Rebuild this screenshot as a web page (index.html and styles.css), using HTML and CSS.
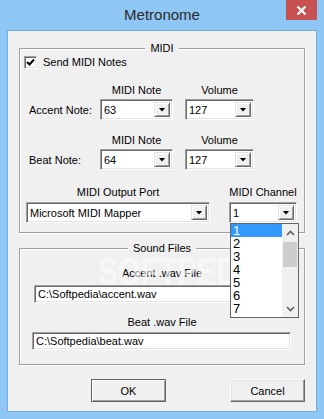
FILE: index.html
```html
<!DOCTYPE html>
<html lang="en">
<head>
    <meta charset="UTF-8">
    <meta name="viewport" content="width=device-width, initial-scale=1.0">
    <title>Metronome</title>
    <link rel="stylesheet" href="styles.css">
</head>
<body>
    <div class="window">
        <div class="titlebar">
            <span class="title">Metronome</span>
            <span class="close">
                <svg width="11" height="9" viewBox="0 0 11 9"><path d="M1.5 0.5 L9.5 8.5 M9.5 0.5 L1.5 8.5" stroke="#fff" stroke-width="2.2"/></svg>
            </span>
        </div>
        <div class="client">
            <div class="group midi">
                <div class="legend">MIDI</div>
                <div class="check-row">
                    <span class="checkbox">
                        <svg width="9" height="9" viewBox="0 0 9 9"><path d="M1 4 L3.5 6.5 L8 1.5" fill="none" stroke="#000" stroke-width="2"/></svg>
                    </span>
                    <span>Send MIDI Notes</span>
                </div>

                <div class="head-row">
                    <span class="h-note">MIDI Note</span>
                    <span class="h-vol">Volume</span>
                </div>
                <div class="combo-row">
                    <span class="row-label">Accent Note:</span>
                    <div class="combo note"><span class="val">63</span><span class="drop"></span></div>
                    <div class="combo vol"><span class="val">127</span><span class="drop"></span></div>
                </div>

                <div class="head-row second">
                    <span class="h-note">MIDI Note</span>
                    <span class="h-vol">Volume</span>
                </div>
                <div class="combo-row">
                    <span class="row-label">Beat Note:</span>
                    <div class="combo note"><span class="val">64</span><span class="drop"></span></div>
                    <div class="combo vol"><span class="val">127</span><span class="drop"></span></div>
                </div>

                <div class="port-heads">
                    <span class="h-port">MIDI Output Port</span>
                    <span class="h-chan">MIDI Channel</span>
                </div>
                <div class="port-row">
                    <div class="combo port"><span class="val">Microsoft MIDI Mapper</span><span class="drop"></span></div>
                    <div class="combo chan">
                        <span class="val">1</span><span class="drop"></span>
                        <div class="list">
                            <div class="items">
                                <div class="item selected">1</div>
                                <div class="item">2</div>
                                <div class="item">3</div>
                                <div class="item">4</div>
                                <div class="item">5</div>
                                <div class="item">6</div>
                                <div class="item">7</div>
                            </div>
                            <div class="scrollbar">
                                <span class="arrow">
                                    <svg width="9" height="6" viewBox="0 0 9 6"><path d="M1 5 L4.5 1.5 L8 5" fill="none" stroke="#606060" stroke-width="1.6"/></svg>
                                </span>
                                <span class="track"><span class="thumb"></span></span>
                                <span class="arrow">
                                    <svg width="9" height="6" viewBox="0 0 9 6"><path d="M1 1 L4.5 4.5 L8 1" fill="none" stroke="#606060" stroke-width="1.6"/></svg>
                                </span>
                            </div>
                        </div>
                    </div>
                </div>
            </div>

            <div class="group sound">
                <div class="legend">Sound Files</div>
                <div class="file-label first">Accent .wav File</div>
                <div class="textbox accent">C:\Softpedia\accent.wav</div>
                <div class="file-label">Beat .wav File</div>
                <div class="textbox beat">C:\Softpedia\beat.wav</div>
                <div class="watermark">SOFTPEDIA<sup>®</sup></div>
            </div>

            <div class="buttons">
                <button class="btn default">OK</button>
                <button class="btn">Cancel</button>
            </div>
        </div>
    </div>
</body>
</html>
```

FILE: styles.css
```css
* {
    box-sizing: border-box;
}

body {
    margin: 0;
    font-family: 'Liberation Sans', Arial, sans-serif;
    font-size: 11px;
    color: #000;
    background: #8ec6f4;
}

.window {
    width: 324px;
    height: 419px;
    background: #8ec6f4;
    overflow: hidden;
}

/* title bar */
.titlebar {
    position: relative;
    height: 30px;
    line-height: 30px;
    text-align: center;
}

.title {
    font-size: 15px;
    color: #2b2b2b;
}

.close {
    position: absolute;
    top: 0;
    right: 7px;
    width: 31px;
    height: 20px;
    background: #c75050;
    display: flex;
    align-items: center;
    justify-content: center;
}

.client {
    margin-left: 7px;
    width: 310px;
    height: 382px;
    background: #f0f0f0;
    border: 1px solid #79addd;
}

/* group boxes */
.group {
    position: relative;
    width: 286px;
    margin-left: 11px;
    border: 1px solid #a0a0a0;
    box-shadow: 1px 1px 0 #fff, inset 1px 1px 0 #fff;
}

.midi {
    margin-top: 17px;
    padding-bottom: 9px;
}

.sound {
    margin-top: 15px;
    padding-bottom: 14px;
}

.legend {
    display: table;
    margin: -7px auto 0;
    padding: 0 5px;
    line-height: 13px;
    background: #f0f0f0;
}

.check-row {
    display: flex;
    align-items: center;
    height: 13px;
    margin-top: 1px;
    padding-left: 4px;
    line-height: 13px;
}

.checkbox {
    width: 13px;
    height: 13px;
    margin-right: 6px;
    background: #fff;
    border: 1px solid;
    border-color: #a0a0a0 #fff #fff #a0a0a0;
    box-shadow: inset 1px 1px 0 #696969, inset -1px -1px 0 #e3e3e3;
    display: flex;
    align-items: center;
    justify-content: center;
}

.head-row {
    display: flex;
    margin-top: 15px;
    padding-left: 80px;
    line-height: 13px;
}

.head-row.second {
    margin-top: 14px;
}

.h-note {
    width: 73px;
    text-align: center;
}

.h-vol {
    width: 69px;
    margin-left: 12px;
    text-align: center;
}

.combo-row {
    display: flex;
    align-items: center;
    margin-top: 2px;
    height: 21px;
}

.row-label {
    width: 80px;
    padding-left: 9px;
}

/* combo boxes */
.combo {
    position: relative;
    display: flex;
    height: 21px;
    padding: 2px;
    background: #fff;
    border: 1px solid;
    border-color: #a0a0a0 #fff #fff #a0a0a0;
    box-shadow: inset 1px 1px 0 #696969, inset -1px -1px 0 #e3e3e3;
}

.combo .val {
    flex: 1;
    padding-left: 1px;
    line-height: 16px;
    white-space: nowrap;
    overflow: hidden;
}

.drop {
    width: 16px;
    background: #f0f0f0;
    border: 1px solid;
    border-color: #e3e3e3 #696969 #696969 #e3e3e3;
    box-shadow: inset 1px 1px 0 #fff, inset -1px -1px 0 #a0a0a0;
    display: flex;
    align-items: center;
    justify-content: center;
}

.drop::after {
    content: "";
    width: 7px;
    height: 4px;
    background: #000;
    clip-path: polygon(0 0, 100% 0, 50% 100%);
}

.combo.note {
    width: 73px;
}

.combo.vol {
    width: 69px;
    margin-left: 12px;
}

.port-heads {
    display: flex;
    margin-top: 16px;
    padding-left: 6px;
    line-height: 13px;
}

.h-port {
    width: 184px;
    text-align: center;
}

.h-chan {
    width: 68px;
    margin-left: 19px;
    text-align: center;
}

.port-row {
    display: flex;
    margin-top: 3px;
    padding-left: 6px;
}

.combo.port {
    width: 184px;
}

.combo.chan {
    width: 68px;
    margin-left: 19px;
}

/* open drop-down list */
.list {
    position: absolute;
    top: 20px;
    left: 0;
    z-index: 5;
    width: 69px;
    height: 95px;
    display: flex;
    background: #fff;
    border: 1px solid #646464;
}

.items {
    flex: 1;
    font-size: 13px;
}

.item {
    height: 13px;
    line-height: 13px;
    padding-left: 2px;
}

.item.selected {
    background: #3399ff;
    color: #fff;
}

.scrollbar {
    width: 16px;
    display: flex;
    flex-direction: column;
    background: #f0f0f0;
}

.arrow {
    height: 17px;
    display: flex;
    align-items: center;
    justify-content: center;
}

.track {
    flex: 1;
    padding-top: 1px;
}

.thumb {
    display: block;
    height: 25px;
    margin: 0 1px;
    background: #cdcdcd;
}

/* sound files */
.file-label {
    margin-top: 13px;
    line-height: 13px;
    text-align: center;
}

.file-label.first {
    margin-top: 12px;
}

.textbox {
    height: 18px;
    padding: 0 3px;
    line-height: 16px;
    background: #fff;
    border: 1px solid;
    border-color: #a0a0a0 #fff #fff #a0a0a0;
    box-shadow: inset 1px 1px 0 #696969, inset -1px -1px 0 #e3e3e3;
    white-space: nowrap;
}

.textbox.accent {
    width: 257px;
    margin: 5px 0 0 14px;
}

.textbox.beat {
    width: 259px;
    margin: 3px 0 0 12px;
}

.watermark {
    position: absolute;
    top: 4px;
    left: 78px;
    font-size: 38px;
    font-weight: bold;
    line-height: 38px;
    color: rgba(255, 255, 255, 0.55);
    transform: scaleX(0.78);
    transform-origin: left top;
    pointer-events: none;
}

.watermark sup {
    font-size: 12px;
    vertical-align: top;
}

/* buttons */
.buttons {
    display: flex;
    gap: 64px;
    margin-top: 14px;
    padding-left: 83px;
}

.btn {
    width: 75px;
    height: 23px;
    padding: 0;
    font-family: inherit;
    font-size: 11px;
    color: #000;
    background: #f0f0f0;
    border: 1px solid;
    border-color: #fff #696969 #696969 #fff;
    box-shadow: inset -1px -1px 0 #a0a0a0, inset 1px 1px 0 #e3e3e3;
}

.btn.default {
    border-color: #646464;
    box-shadow: inset 1px 1px 0 #fff, inset -1px -1px 0 #a0a0a0;
}
```
